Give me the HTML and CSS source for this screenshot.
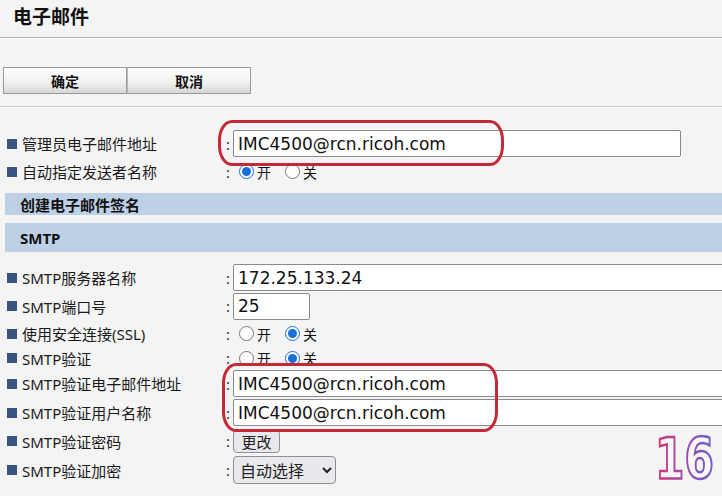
FILE: index.html
```html
<!DOCTYPE html>
<html lang="zh-CN">
<head>
    <meta charset="UTF-8">
    <meta name="viewport" content="width=device-width, initial-scale=1.0">
    <title>电子邮件</title>
    <link rel="stylesheet" href="styles.css">
</head>
<body>
    <header class="page-head">
        <h1>电子邮件</h1>
    </header>

    <div class="actions">
        <button class="act-btn">确定</button>
        <button class="act-btn">取消</button>
    </div>

    <div class="form">
        <div class="row r-admin">
            <span class="label">管理员电子邮件地址</span>
            <span class="colon">:</span>
            <input class="text wide" type="text" value="IMC4500@rcn.ricoh.com">
        </div>
        <div class="row r-sender">
            <span class="label">自动指定发送者名称</span>
            <span class="colon">:</span>
            <label class="opt"><input type="radio" name="sender" checked>开</label>
            <label class="opt"><input type="radio" name="sender">关</label>
        </div>

        <div class="band band-cut"><span>创建电子邮件签名</span></div>
        <div class="band band-smtp"><span>SMTP</span></div>

        <div class="smtp">
            <div class="row r-server">
                <span class="label">SMTP服务器名称</span>
                <span class="colon">:</span>
                <input class="text full" type="text" value="172.25.133.24">
            </div>
            <div class="row r-port">
                <span class="label">SMTP端口号</span>
                <span class="colon">:</span>
                <input class="text port" type="text" value="25">
            </div>
            <div class="row r-ssl">
                <span class="label">使用安全连接(SSL)</span>
                <span class="colon">:</span>
                <label class="opt"><input type="radio" name="ssl">开</label>
                <label class="opt"><input type="radio" name="ssl" checked>关</label>
            </div>
            <div class="row r-auth">
                <span class="label">SMTP验证</span>
                <span class="colon">:</span>
                <label class="opt"><input type="radio" name="auth">开</label>
                <label class="opt"><input type="radio" name="auth" checked>关</label>
            </div>
            <div class="row r-mail">
                <span class="label">SMTP验证电子邮件地址</span>
                <span class="colon">:</span>
                <input class="text full" type="text" value="IMC4500@rcn.ricoh.com">
            </div>
            <div class="row r-user">
                <span class="label">SMTP验证用户名称</span>
                <span class="colon">:</span>
                <input class="text full" type="text" value="IMC4500@rcn.ricoh.com">
            </div>
            <div class="row r-pass">
                <span class="label">SMTP验证密码</span>
                <span class="colon">:</span>
                <button class="small-btn">更改</button>
            </div>
            <div class="row r-enc">
                <span class="label">SMTP验证加密</span>
                <span class="colon">:</span>
                <select class="pick">
                    <option>自动选择</option>
                    <option>启用</option>
                    <option>关闭</option>
                </select>
            </div>
        </div>
    </div>

    <!-- red marks round the address fields -->
    <div class="mark mark-admin"></div>
    <div class="mark mark-auth"></div>

    <svg class="page-no" width="66" height="72" viewBox="0 0 66 72">
        <defs>
            <linearGradient id="noGrad" x1="0" y1="0" x2="1" y2="0">
                <stop offset="0" stop-color="#d8336f"/>
                <stop offset="0.5" stop-color="#a04aa8"/>
                <stop offset="1" stop-color="#6a63c8"/>
            </linearGradient>
        </defs>
        <g transform="translate(2 55) scale(0.92 1.25)">
            <text x="0" y="0" class="page-no-text">16</text>
        </g>
    </svg>
</body>
</html>
```

FILE: styles.css
```css
* {
    box-sizing: border-box;
}

body {
    margin: 0;
    background: #f4f4f4;
    color: #111;
    font-family: "Noto Sans", "Noto Sans CJK SC", sans-serif;
    position: relative;
    overflow: hidden;
    height: 496px;
}

.page-head {
    height: 38px;
    border-bottom: 1px solid #b4b4b4;
    box-shadow: 0 1px 0 #fff;
    padding: 3px 13px 0;
}

.page-head h1 {
    margin: 0;
    font-size: 19px;
    font-weight: bold;
    font-family: "Noto Sans CJK SC", sans-serif;
    line-height: 26px;
}

.actions {
    display: flex;
    padding: 29px 0 0 3px;
    height: 69px;
    border-bottom: 1px solid #c8c8c8;
    box-shadow: 0 1px 0 #fff;
}

.act-btn {
    width: 124px;
    height: 27px;
    margin: 0;
    border: 1px solid #9a9a9a;
    background: linear-gradient(#ffffff, #f2f2f2 55%, #d6d6d6);
    font-family: "Noto Sans CJK SC", sans-serif;
    font-weight: bold;
    font-size: 14px;
    color: #111;
    padding: 0;
}

.act-btn + .act-btn {
    border-left: 1px solid #b8b8b8;
}

.form {
    padding-top: 22px;
}

.row {
    display: flex;
    align-items: center;
    height: 28px;
}

.label {
    flex: 0 0 226px;
    padding-left: 7px;
    display: flex;
    align-items: center;
    font-size: 15px;
    font-family: "Noto Sans", "Noto Sans CJK SC", sans-serif;
    color: #1a1a1a;
    white-space: nowrap;
}

.label::before {
    content: "";
    width: 10px;
    height: 10px;
    background: #37557f;
    margin-right: 5px;
}

.colon {
    flex: 0 0 7px;
    font-size: 15px;
    color: #333;
}

.text {
    flex: none;
    height: 27px;
    border: 1px solid #8a8a8a;
    border-radius: 2px;
    background: #fff;
    font-family: "DejaVu Sans", sans-serif;
    font-size: 17px;
    padding: 0 4px;
    color: #111;
    outline: none;
}

.wide {
    width: 448px;
}

.full {
    width: 500px;
}

.port {
    width: 77px;
}

.opt {
    display: flex;
    align-items: center;
    font-family: "Noto Sans CJK SC", sans-serif;
    font-size: 14px;
    margin-right: 12px;
}

.opt input {
    accent-color: #1a6ed8;
    width: 15px;
    height: 15px;
    margin: 0 3px 0 6px;
}

.opt + .opt input {
    margin-left: 2px;
}

.r-admin {
    height: 29px;
}

.r-sender {
    height: 27px;
    margin-bottom: 8px;
}

.band {
    margin-left: 5px;
    background: #bdd0e6;
    font-family: "Noto Sans", "Noto Sans CJK SC", sans-serif;
    font-weight: bold;
    font-size: 15px;
    padding-left: 15px;
    display: flex;
}

.band-cut {
    height: 22px;
    align-items: flex-end;
    margin-bottom: 8px;
}

.band-cut span {
    line-height: 20px;
}

.band-smtp {
    height: 29px;
    align-items: center;
}

.smtp {
    padding-top: 11px;
}

.r-server { height: 29px; }
.r-port { height: 28px; }
.r-ssl { height: 27px; }
.r-auth { height: 22px; }
.r-mail { height: 29px; }
.r-user { height: 29px; }
.r-pass { height: 28px; }
.r-enc { height: 30px; }

.small-btn {
    flex: none;
    height: 23px;
    width: 47px;
    padding: 0;
    border: 1px solid #8f8f8f;
    border-radius: 4px;
    background: #e9e9ed;
    font-family: "Noto Sans CJK SC", sans-serif;
    font-size: 15px;
    color: #222;
}

.pick {
    flex: none;
    height: 28px;
    width: 103px;
    border: 1px solid #8f8f8f;
    border-radius: 4px;
    background: #e9e9ed;
    font-family: "Noto Sans CJK SC", sans-serif;
    font-size: 16px;
    color: #222;
    padding: 0 2px;
}

.mark {
    position: absolute;
    border: 3px solid #c42a35;
    border-radius: 14px / 20px;
}

.mark-admin {
    left: 218px;
    top: 120px;
    width: 286px;
    height: 46px;
}

.mark-auth {
    left: 222px;
    top: 363px;
    width: 276px;
    height: 69px;
}

.page-no {
    position: absolute;
    left: 653px;
    top: 424px;
}

.page-no-text {
    font-family: "DejaVu Sans", sans-serif;
    font-weight: bold;
    font-size: 46px;
    fill: #f7f7f7;
    stroke: url(#noGrad);
    stroke-width: 2;
}
```
